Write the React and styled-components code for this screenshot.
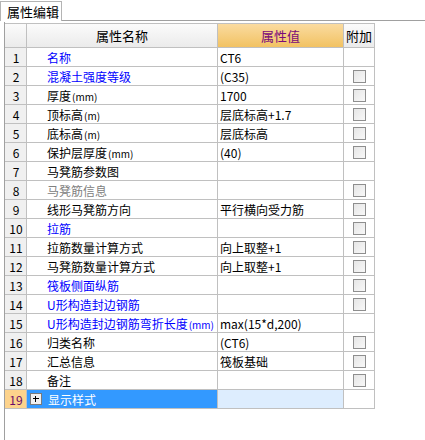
import React from "react";
import styled, { createGlobalStyle } from "styled-components";

const GlobalStyle = createGlobalStyle`
  html, body {
    margin: 0;
    padding: 0;
    background: #ffffff;
  }
  body {
    font-family: "Noto Sans CJK SC", "DejaVu Sans", sans-serif;
    font-size: 12px;
    color: #000;
  }
`;

const Page = styled.div`
  width: 425px;
  height: 440px;
  display: flex;
  flex-direction: column;
  overflow: hidden;
`;

const TabBar = styled.div`
  height: 20px;
  display: flex;
  align-items: flex-end;
  border-bottom: 1px solid #a0a0a0;
`;

const Tab = styled.div`
  width: 62px;
  height: 19px;
  border: 1px solid #b4b4b4;
  border-bottom: none;
  background: #ffffff;
  font-size: 13px;
  line-height: 19px;
  padding-left: 6px;
  box-sizing: border-box;
  margin-bottom: -1px;
  height: 20px;
`;

const Panel = styled.div`
  flex: 1;
  margin-left: 4px;
  margin-top: 1px;
  padding-top: 1px;
  border-left: 1px solid #a0a0a0;
`;

const Grid = styled.div`
  display: grid;
  grid-template-columns: 22px 191px 126px 31px;
  width: 370px;
  border-top: 1px solid #c0c0c0;
`;

const HeadCell = styled.div`
  height: 24px;
  box-sizing: border-box;
  border-right: 1px solid #c0c0c0;
  border-bottom: 1px solid #c0c0c0;
  display: flex;
  align-items: center;
  justify-content: center;
  font-size: 13px;
  color: ${(p) => (p.$accent ? "#7a0a7a" : "#000")};
  background: ${(p) =>
    p.$accent
      ? "linear-gradient(#fadba0, #f2c262)"
      : "linear-gradient(#fbfbfb, #ebebeb)"};
`;

const Cell = styled.div`
  height: 19px;
  box-sizing: border-box;
  border-right: 1px solid #c0c0c0;
  border-bottom: 1px solid #c0c0c0;
  display: flex;
  align-items: center;
  white-space: nowrap;
  overflow: hidden;
  font-size: 12px;
`;

const NumCell = styled(Cell)`
  justify-content: center;
  padding-left: 1px;
  background: ${(p) => (p.$selected ? "#fdd38c" : "#f0f0f0")};
  color: ${(p) => (p.$selected ? "#6a0a6a" : "#000")};
`;

const NameCell = styled(Cell)`
  padding-left: ${(p) => (p.$selected ? "3px" : "20px")};
  gap: 6px;
  background: ${(p) => (p.$selected ? "#3399ff" : "#fff")};
  color: ${(p) =>
    p.$selected ? "#fff" : p.$tone === "blue" ? "#0000ff" : p.$tone === "gray" ? "#808080" : "#000"};
`;

const ValueCell = styled(Cell)`
  padding-left: 2px;
  background: ${(p) => (p.$selected ? "#ddedfe" : "#fff")};
`;

const AttachCell = styled(Cell)`
  justify-content: center;
  padding-left: 1px;
`;

const Unit = styled.span`
  font-size: 10px;
  margin-left: 1px;
`;

const Check = styled.span`
  width: 11px;
  height: 11px;
  border: 1px solid #8e8e8e;
  background: linear-gradient(135deg, #e6e6e6, #f8f8f8);
`;

const PlusBox = styled.span`
  width: 10px;
  height: 10px;
  border: 1px solid #7a7a7a;
  background: #f0f0f0;
  position: relative;
  &::before,
  &::after {
    content: "";
    position: absolute;
    background: #000;
  }
  &::before {
    left: 2px;
    right: 2px;
    top: 4px;
    height: 1px;
  }
  &::after {
    top: 2px;
    bottom: 2px;
    left: 4px;
    width: 1px;
  }
`;

const rows = [
  { name: "名称", tone: "blue", value: "CT6", check: false },
  { name: "混凝土强度等级", tone: "blue", value: "(C35)", check: true },
  { name: "厚度", unit: "(mm)", value: "1700", check: true },
  { name: "顶标高", unit: "(m)", value: "层底标高+1.7", check: true },
  { name: "底标高", unit: "(m)", value: "层底标高", check: true },
  { name: "保护层厚度", unit: "(mm)", value: "(40)", check: true },
  { name: "马凳筋参数图", value: "", check: false },
  { name: "马凳筋信息", tone: "gray", value: "", check: true },
  { name: "线形马凳筋方向", value: "平行横向受力筋", check: true },
  { name: "拉筋", tone: "blue", value: "", check: true },
  { name: "拉筋数量计算方式", value: "向上取整+1", check: true },
  { name: "马凳筋数量计算方式", value: "向上取整+1", check: true },
  { name: "筏板侧面纵筋", tone: "blue", value: "", check: true },
  { name: "U形构造封边钢筋", tone: "blue", value: "", check: true },
  { name: "U形构造封边钢筋弯折长度", unit: "(mm)", tone: "blue", value: "max(15*d,200)", check: false },
  { name: "归类名称", value: "(CT6)", check: true },
  { name: "汇总信息", value: "筏板基础", check: true },
  { name: "备注", value: "", check: true },
  { name: "显示样式", value: "", check: false, selected: true },
];

export default function App() {
  return (
    <Page>
      <GlobalStyle />
      <TabBar>
        <Tab>属性编辑</Tab>
      </TabBar>
      <Panel>
        <Grid>
          <HeadCell />
          <HeadCell>属性名称</HeadCell>
          <HeadCell $accent>属性值</HeadCell>
          <HeadCell>附加</HeadCell>
          {rows.map((r, i) => (
            <React.Fragment key={i}>
              <NumCell $selected={r.selected}>{i + 1}</NumCell>
              <NameCell $tone={r.tone} $selected={r.selected}>
                {r.selected && <PlusBox />}
                <span>
                  {r.name}
                  {r.unit && <Unit>{r.unit}</Unit>}
                </span>
              </NameCell>
              <ValueCell $selected={r.selected}>{r.value}</ValueCell>
              <AttachCell>{r.check && <Check />}</AttachCell>
            </React.Fragment>
          ))}
        </Grid>
      </Panel>
    </Page>
  );
}
